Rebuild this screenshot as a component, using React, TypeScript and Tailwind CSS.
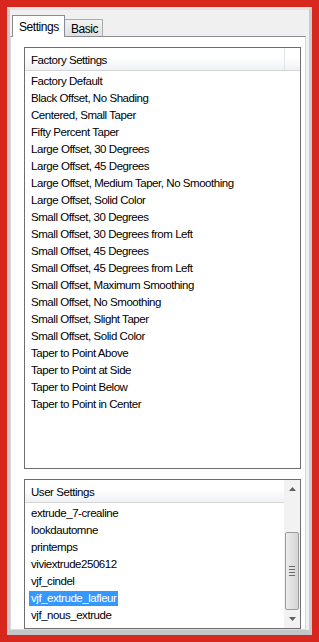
import React from "react";

const factory = [
  "Factory Default",
  "Black Offset, No Shading",
  "Centered, Small Taper",
  "Fifty Percent Taper",
  "Large Offset, 30 Degrees",
  "Large Offset, 45 Degrees",
  "Large Offset, Medium Taper, No Smoothing",
  "Large Offset, Solid Color",
  "Small Offset, 30 Degrees",
  "Small Offset, 30 Degrees from Left",
  "Small Offset, 45 Degrees",
  "Small Offset, 45 Degrees from Left",
  "Small Offset, Maximum Smoothing",
  "Small Offset, No Smoothing",
  "Small Offset, Slight Taper",
  "Small Offset, Solid Color",
  "Taper to Point Above",
  "Taper to Point at Side",
  "Taper to Point Below",
  "Taper to Point in Center",
];

const user = [
  "extrude_7-crealine",
  "lookdautomne",
  "printemps",
  "viviextrude250612",
  "vjf_cindel",
  "vjf_extrude_lafleur",
  "vjf_nous_extrude",
];

function Item({ label, selected }: { label: string; selected?: boolean }) {
  return (
    <div className="h-[17px] flex items-center pl-[4px]">
      <span
        className={
          "px-[2px] h-[15px] leading-[15px] whitespace-nowrap " +
          (selected ? "bg-[#3399ff] text-white" : "text-black")
        }
      >
        {label}
      </span>
    </div>
  );
}

export default function App() {
  return (
    <div
      className="w-[319px] h-[642px] bg-[#d8281e] p-[7px] text-[11.5px] tracking-[-0.45px] text-black"
      style={{ fontFamily: '"Liberation Sans", Arial, sans-serif' }}
    >
      <div className="h-full flex flex-col bg-[#f0f0f0] border-l-[3px] border-r-[3px] border-b-[5px] border-t-[3px] border-l-[#c9cacf] border-r-[#c9cacf] border-b-[#c4c5ca] border-t-[#dde3ea]">
        {/* tabs */}
        <div className="h-[27px] flex items-end pl-[2px] shrink-0">
          <div className="relative z-10 h-[22px] w-[53px] bg-white border-l border-t border-r border-[#898c95] flex items-start pl-[6px] pt-[4px] leading-[15px] text-[12px]">
            Settings
          </div>
          <div className="-ml-px mb-px h-[17px] w-[39px] bg-gradient-to-b from-[#f2f2f2] to-[#e0e0e0] border-l border-t border-r border-[#acacac] pl-[6px] pt-[2px] leading-[15px] text-[12px]">
            Basic
          </div>
        </div>
        {/* panel */}
        <div className="-mt-px mr-[3px] flex-1 bg-white border border-[#d9d9d9] border-t-[#898c95] pl-[13px] pr-[4px] pt-[10px] flex flex-col gap-[10px]">
          {/* factory list */}
          <div className="h-[422px] border border-[#6f6f6f] flex flex-col">
            <div className="h-[23px] flex border-b border-[#d5d5d5] bg-gradient-to-b from-white from-40% to-[#eef1f6]">
              <div className="w-[260px] border-r border-[#e2e4e8] pl-[6px] pt-[2px] flex items-center leading-[15px]">
                Factory Settings
              </div>
              <div className="flex-1" />
            </div>
            <div className="pt-[2px]">
              {factory.map((f) => (
                <Item key={f} label={f} />
              ))}
            </div>
          </div>
          {/* user list */}
          <div className="h-[150px] border border-[#6f6f6f] flex">
            <div className="flex-1 flex flex-col">
              <div className="h-[23px] border-b border-[#d5d5d5] bg-gradient-to-b from-white from-40% to-[#eef1f6] pl-[6px] pt-[2px] flex items-center leading-[15px]">
                User Settings
              </div>
              <div className="pt-[2px]">
                {user.map((u) => (
                  <Item key={u} label={u} selected={u === "vjf_extrude_lafleur"} />
                ))}
              </div>
            </div>
            <div className="w-[16px] bg-[#f2f2f2] flex flex-col items-center">
              <div className="h-[17px] w-full flex items-center justify-center">
                <svg width="7" height="4" viewBox="0 0 7 4">
                  <path d="M0 4 L3.5 0 L7 4 Z" fill="#606060" />
                </svg>
              </div>
              <div className="h-[35px]" />
              <div className="w-[14px] h-[78px] rounded-[2px] border border-[#9c9c9c] bg-gradient-to-r from-[#ececec] to-[#d4d4d4] flex flex-col items-center justify-center gap-[2px]">
                <div className="w-[6px] h-px bg-[#6a6a6a]" />
                <div className="w-[6px] h-px bg-[#6a6a6a]" />
                <div className="w-[6px] h-px bg-[#6a6a6a]" />
                <div className="w-[6px] h-px bg-[#6a6a6a]" />
              </div>
              <div className="flex-1 w-full flex items-center justify-center">
                <svg width="7" height="4" viewBox="0 0 7 4">
                  <path d="M0 0 L7 0 L3.5 4 Z" fill="#606060" />
                </svg>
              </div>
            </div>
          </div>
        </div>
      </div>
    </div>
  );
}
